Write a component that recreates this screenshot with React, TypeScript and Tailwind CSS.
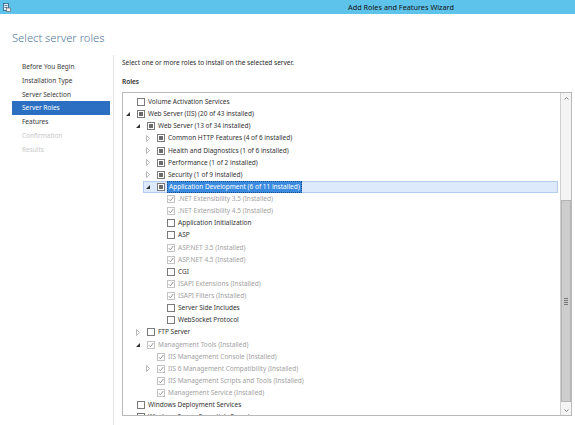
import React from 'react'

type Check = 'none' | 'partial' | 'installed'
type Exp = 'open' | 'closed' | null

type Node = {
  label: string
  level: number
  check: Check
  exp: Exp
  selected?: boolean
}

const nodes: Node[] = [
  { label: 'Volume Activation Services', level: 0, check: 'none', exp: null },
  { label: 'Web Server (IIS) (20 of 43 installed)', level: 0, check: 'partial', exp: 'open' },
  { label: 'Web Server (13 of 34 installed)', level: 1, check: 'partial', exp: 'open' },
  { label: 'Common HTTP Features (4 of 6 installed)', level: 2, check: 'partial', exp: 'closed' },
  { label: 'Health and Diagnostics (1 of 6 installed)', level: 2, check: 'partial', exp: 'closed' },
  { label: 'Performance (1 of 2 installed)', level: 2, check: 'partial', exp: 'closed' },
  { label: 'Security (1 of 9 installed)', level: 2, check: 'partial', exp: 'closed' },
  { label: 'Application Development (6 of 11 installed)', level: 2, check: 'partial', exp: 'open', selected: true },
  { label: '.NET Extensibility 3.5 (Installed)', level: 3, check: 'installed', exp: null },
  { label: '.NET Extensibility 4.5 (Installed)', level: 3, check: 'installed', exp: null },
  { label: 'Application Initialization', level: 3, check: 'none', exp: null },
  { label: 'ASP', level: 3, check: 'none', exp: null },
  { label: 'ASP.NET 3.5 (Installed)', level: 3, check: 'installed', exp: null },
  { label: 'ASP.NET 4.5 (Installed)', level: 3, check: 'installed', exp: null },
  { label: 'CGI', level: 3, check: 'none', exp: null },
  { label: 'ISAPI Extensions (Installed)', level: 3, check: 'installed', exp: null },
  { label: 'ISAPI Filters (Installed)', level: 3, check: 'installed', exp: null },
  { label: 'Server Side Includes', level: 3, check: 'none', exp: null },
  { label: 'WebSocket Protocol', level: 3, check: 'none', exp: null },
  { label: 'FTP Server', level: 1, check: 'none', exp: 'closed' },
  { label: 'Management Tools (Installed)', level: 1, check: 'installed', exp: 'open' },
  { label: 'IIS Management Console (Installed)', level: 2, check: 'installed', exp: null },
  { label: 'IIS 6 Management Compatibility (Installed)', level: 2, check: 'installed', exp: 'closed' },
  { label: 'IIS Management Scripts and Tools (Installed)', level: 2, check: 'installed', exp: null },
  { label: 'Management Service (Installed)', level: 2, check: 'installed', exp: null },
  { label: 'Windows Deployment Services', level: 0, check: 'none', exp: null },
  { label: 'Windows Server Essentials Experience', level: 0, check: 'none', exp: null },
]

const steps = [
  { label: 'Before You Begin', state: 'done' },
  { label: 'Installation Type', state: 'done' },
  { label: 'Server Selection', state: 'done' },
  { label: 'Server Roles', state: 'active' },
  { label: 'Features', state: 'done' },
  { label: 'Confirmation', state: 'off' },
  { label: 'Results', state: 'off' },
]

const indents = ['pl-0', 'pl-[10px]', 'pl-[20px]', 'pl-[30px]']

function Expander({ exp }: { exp: Exp }) {
  if (exp === 'open') {
    return (
      <svg width="4" height="4" viewBox="0 0 4 4">
        <polygon points="4,0 4,4 0,4" fill="#333" />
      </svg>
    )
  }
  if (exp === 'closed') {
    return (
      <svg width="4" height="7" viewBox="0 0 4 7">
        <polygon points="0.5,0.5 3.5,3.5 0.5,6.5" fill="none" stroke="#a8a8a8" strokeWidth="0.8" />
      </svg>
    )
  }
  return null
}

function CheckBox({ check }: { check: Check }) {
  if (check === 'installed') {
    return (
      <span className="flex h-[8px] w-[8px] items-center justify-center border border-[#c4c4c4] bg-white">
        <svg width="6" height="6" viewBox="0 0 6 6">
          <path d="M0.8 3.2 L2.4 4.8 L5.3 1" fill="none" stroke="#8a8a8a" strokeWidth="0.9" />
        </svg>
      </span>
    )
  }
  return (
    <span className="flex h-[8px] w-[8px] items-center justify-center border border-[#7a7a7a] bg-white">
      {check === 'partial' && <span className="h-[4px] w-[4px] bg-[#6b6b6b]" />}
    </span>
  )
}

function TreeRow({ node }: { node: Node }) {
  const text = node.check === 'installed' ? 'text-[#a2a2a2]' : 'text-[#333]'
  return (
    <div className={`${indents[node.level]} h-[12.14px]`}>
      <div
        className={`flex h-full items-center border ${
          node.selected ? 'border-[#b3cdee] bg-[#dceafc]' : 'border-transparent'
        }`}
      >
        <span className="flex w-[11px] shrink-0 items-center pl-[2px]">
          <Expander exp={node.exp} />
        </span>
        <span className="ml-[2px] mr-[2px] shrink-0">
          <CheckBox check={node.check} />
        </span>
        <span
          className={`whitespace-nowrap leading-[10px] ${
            node.selected ? 'border border-dotted border-[#1a4d8a] bg-[#3a8be0] px-[1px] text-white' : `${text} px-[1px]`
          }`}
        >
          {node.label}
        </span>
      </div>
    </div>
  )
}

export default function App() {
  return (
    <div className="h-[425px] w-[575px] overflow-hidden bg-white font-['Noto_Sans',sans-serif] text-[6.5px] text-[#333]">
      <div className="flex h-[14px] items-center bg-[#5ec3ea]">
        <svg className="ml-[3px]" width="8" height="9" viewBox="0 0 8 9">
          <rect x="0.5" y="0.5" width="5" height="7" fill="#e8f4fb" stroke="#2c5d86" strokeWidth="0.8" />
          <rect x="1.5" y="2" width="3" height="0.8" fill="#2c5d86" />
          <rect x="1.5" y="4" width="3" height="0.8" fill="#2c5d86" />
          <rect x="3.5" y="5" width="4" height="3.5" fill="#f0f0f0" stroke="#555" strokeWidth="0.6" />
        </svg>
        <span className="ml-[337px] text-[7.3px] text-[#111]">Add Roles and Features Wizard</span>
      </div>

      <div className="h-[41px] pl-[12px] pt-[17px]">
        <h1 className="text-[11.2px] font-light leading-[14px] text-[#4f7697]">Select server roles</h1>
      </div>

      <div className="flex h-[370px]">
        <nav className="w-[114px] shrink-0 border-r border-[#e6e6e6] pt-[5px]">
          <ul>
            {steps.map((s) => (
              <li key={s.label} className="h-[13.8px] pl-[12px] pr-[3px]">
                <div
                  className={`flex h-full items-center pl-[10px] ${
                    s.state === 'active'
                      ? 'bg-[#2a6fc2] text-white'
                      : s.state === 'off'
                        ? 'text-[#c8c8c8]'
                        : 'text-[#3a3a3a]'
                  }`}
                >
                  {s.label}
                </div>
              </li>
            ))}
          </ul>
        </nav>

        <main className="flex-1 pl-[8px] pr-[3px]">
          <p className="mt-[3px] leading-[10px] text-[#2a2a2a]">
            Select one or more roles to install on the selected server.
          </p>
          <p className="mt-[9px] font-semibold leading-[10px] text-[#2a2a2a]">Roles</p>
          <div className="mt-[5px] flex h-[324px] border border-[#b9b9b9]">
            <div className="flex-1 overflow-hidden pr-[2px] pt-[3px]">
              {nodes.map((n) => (
                <TreeRow key={n.label} node={n} />
              ))}
            </div>
            <div className="flex w-[11px] shrink-0 flex-col border-l border-[#cfcfcf] bg-[#f4f4f4]">
              <div className="flex h-[10px] items-center justify-center">
                <svg width="5" height="3" viewBox="0 0 5 3">
                  <path d="M0.5 2.5 L2.5 0.5 L4.5 2.5" fill="none" stroke="#666" strokeWidth="0.8" />
                </svg>
              </div>
              <div className="h-[97px]" />
              <div className="flex h-[202px] items-center justify-center border border-[#b4b4b4] bg-[#cdcdcd]">
                <div className="flex flex-col gap-[1px]">
                  <span className="h-[1px] w-[4px] bg-[#777]" />
                  <span className="h-[1px] w-[4px] bg-[#777]" />
                  <span className="h-[1px] w-[4px] bg-[#777]" />
                  <span className="h-[1px] w-[4px] bg-[#777]" />
                </div>
              </div>
              <div className="flex-1" />
              <div className="flex h-[10px] items-center justify-center">
                <svg width="5" height="3" viewBox="0 0 5 3">
                  <path d="M0.5 0.5 L2.5 2.5 L4.5 0.5" fill="none" stroke="#666" strokeWidth="0.8" />
                </svg>
              </div>
            </div>
          </div>
        </main>
      </div>
    </div>
  )
}
